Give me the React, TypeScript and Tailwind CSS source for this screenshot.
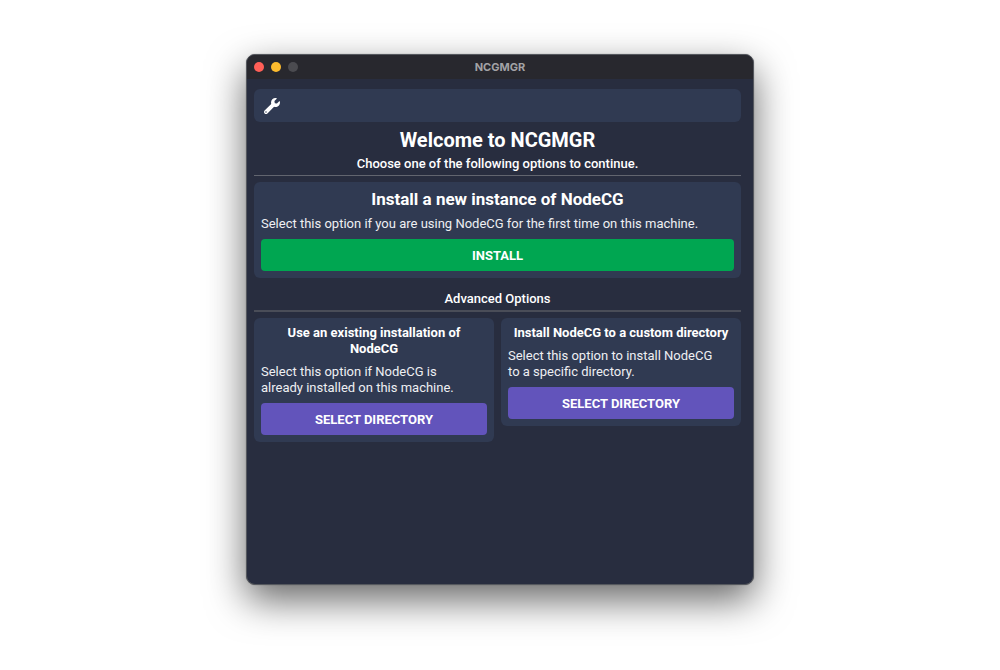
import type { ReactNode } from "react";
import { FaWrench } from "react-icons/fa";

function TitleBar() {
  return (
    <header className="relative flex h-6 items-center justify-center bg-[#28282e]">
      <div className="absolute left-[7px] flex gap-[7px]">
        <button aria-label="Close" className="size-[10px] rounded-full bg-[#ff5f57]" />
        <button aria-label="Minimize" className="size-[10px] rounded-full bg-[#febc2e]" />
        <button aria-label="Zoom" disabled className="size-[10px] rounded-full bg-[#4b4b50]" />
      </div>
      <span className="font-[Inter] text-[11px] font-bold text-[#a3a3a6]">NCGMGR</span>
    </header>
  );
}

function ActionButton({ className, children }: { className: string; children: ReactNode }) {
  return (
    <button className={`block h-8 w-full rounded pt-px text-[13px] font-bold uppercase ${className}`}>
      {children}
    </button>
  );
}

function Card({ children }: { children: ReactNode }) {
  return <section className="rounded-md bg-[#303a52] p-[7px]">{children}</section>;
}

function CardText({ children }: { children: ReactNode }) {
  return <p className="py-[7px] pr-3 text-[13px] leading-4 text-[#eeeff2]">{children}</p>;
}

export default function App() {
  return (
    <div className="flex min-h-screen items-start justify-center bg-white pt-[54px] font-[Roboto,sans-serif] text-white">
      <div className="w-full max-w-[508px] overflow-hidden rounded-[9px] border border-[#55585e] bg-[#282d3f] shadow-[0_15px_38px_rgba(0,0,0,0.6),0_0_1px_rgba(0,0,0,0.5)]">
        <TitleBar />
        <main className="min-h-[505px] pt-[10px] pr-3 pl-[7px]">
          <nav className="flex h-[33px] items-center rounded-md bg-[#303a52] px-[10px]">
            <button aria-label="Settings">
              <FaWrench size={16} />
            </button>
          </nav>

          <div className="border-b border-[#62656f] pt-[6px] pb-[3px] text-center">
            <h1 className="text-xl leading-6 font-bold">Welcome to NCGMGR</h1>
            <p className="pt-1 text-[13px] leading-4 font-medium">
              Choose one of the following options to continue.
            </p>
          </div>

          <div className="pt-[6px]">
            <Card>
              <h2 className="text-center text-[17px] leading-5 font-bold">
                Install a new instance of NodeCG
              </h2>
              <CardText>
                Select this option if you are using NodeCG for the first time on this machine.
              </CardText>
              <ActionButton className="bg-[#00a651]">Install</ActionButton>
            </Card>
          </div>

          <h2 className="mt-[13px] border-b-2 border-[#4a4d58] pb-[3px] text-center text-[13px] leading-4 font-medium">
            Advanced Options
          </h2>

          <div className="grid grid-cols-2 items-start gap-[7px] pt-[6px]">
            <Card>
              <h3 className="px-1 text-center text-[13px] leading-4 font-bold">
                Use an existing installation of NodeCG
              </h3>
              <CardText>
                Select this option if NodeCG is already installed on this machine.
              </CardText>
              <ActionButton className="bg-[#6254bb]">Select directory</ActionButton>
            </Card>
            <Card>
              <h3 className="px-1 text-center text-[13px] leading-4 font-bold">
                Install NodeCG to a custom directory
              </h3>
              <CardText>Select this option to install NodeCG to a specific directory.</CardText>
              <ActionButton className="bg-[#6254bb]">Select directory</ActionButton>
            </Card>
          </div>
        </main>
      </div>
    </div>
  );
}
